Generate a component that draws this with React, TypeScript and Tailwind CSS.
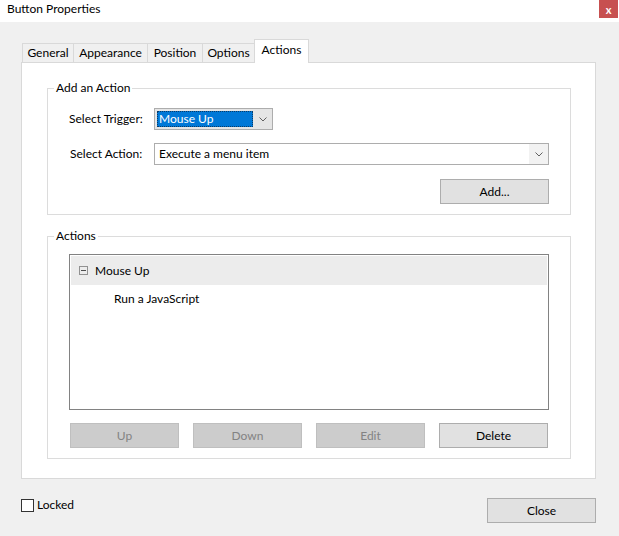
import { useState } from 'react';

const tabs = [
  { label: 'General', w: 'w-[52px]' },
  { label: 'Appearance', w: 'w-[75px]' },
  { label: 'Position', w: 'w-[56px]' },
  { label: 'Options', w: 'w-[53px]' },
];

function Chevron() {
  return (
    <svg width="8" height="5" viewBox="0 0 8 5" className="text-[#606060]">
      <path d="M0.5 0.5 L4 4 L7.5 0.5" fill="none" stroke="currentColor" strokeWidth="1" />
    </svg>
  );
}

function WinButton({ label, disabled, className = '' }: { label: string; disabled?: boolean; className?: string }) {
  return (
    <button
      className={
        'w-[109px] h-[25px] border text-[12px] ' +
        (disabled ? 'bg-[#cccccc] border-[#bfbfbf] text-[#838383]' : 'bg-[#e1e1e1] border-[#adadad] text-black') +
        ' ' +
        className
      }
    >
      {label}
    </button>
  );
}

export default function App() {
  const [locked, setLocked] = useState(false);

  return (
    <div className="w-[619px] h-[536px] bg-[#f0f0f0] flex flex-col font-['Segoe_UI','Lato',sans-serif] text-[12px] text-black leading-[16px] overflow-hidden">
      {/* title bar */}
      <div className="h-[22px] bg-white flex justify-between items-start">
        <span className="pl-[7px] pt-px">Button Properties</span>
        <div className="w-[19px] h-[18px] mr-[1px] bg-[#c75050] text-white text-[11px] font-bold flex items-center justify-center leading-none">x</div>
      </div>

      {/* tabs */}
      <div className="flex items-end pl-[22px] mt-[17px] h-[23px]">
        {tabs.map((t) => (
          <div key={t.label} className={`${t.w} h-[19px] border border-[#d9d9d9] border-b-0 -ml-px first:ml-0 bg-[#f0f0f0] flex items-center justify-center`}>
            {t.label}
          </div>
        ))}
        <div className="w-[55px] h-[24px] border border-[#d9d9d9] border-b-0 -ml-px bg-white relative z-10 -mb-px flex items-start justify-center pt-[2px]">
          Actions
        </div>
      </div>

      {/* panel */}
      <div className="ml-[21px] w-[575px] h-[417px] border border-[#d9d9d9] bg-white pt-[17px] pl-[25px]">
        <fieldset className="w-[524px] border border-[#dcdcdc] pb-[10px]">
          <legend className="ml-[6px] px-[2px] leading-[16px]">Add an Action</legend>
          <div className="pt-[12px] pl-[21px] pr-[21px]">
            <div className="flex items-center h-[22px]">
              <span className="w-[85px]">Select Trigger:</span>
              <div className="w-[119px] h-[22px] border border-[#adadad] bg-[#e5e5e5] flex items-center pl-[2px]">
                <div className="w-[96px] h-[16px] bg-[#0078d7] text-white outline outline-1 outline-dotted outline-[#0b3b66] -outline-offset-1 pl-[2px] leading-[16px]">
                  Mouse Up
                </div>
                <div className="flex-1 flex justify-center">
                  <Chevron />
                </div>
              </div>
            </div>
            <div className="flex items-center h-[22px] mt-[13px]">
              <span className="w-[85px] pl-px">Select Action:</span>
              <div className="w-[395px] h-[22px] border border-[#adadad] bg-white flex items-center">
                <span className="flex-1 pl-[4px]">Execute a menu item</span>
                <div className="w-[19px] h-full bg-[#f2f2f2] flex items-center justify-center">
                  <Chevron />
                </div>
              </div>
            </div>
            <div className="flex justify-end mt-[14px]">
              <WinButton label="Add..." className="h-[24px]" />
            </div>
          </div>
        </fieldset>

        <fieldset className="w-[524px] border border-[#dcdcdc] mt-[13px] pb-[10px]">
          <legend className="ml-[6px] px-[2px] leading-[16px]">Actions</legend>
          <div className="pt-[10px] pl-[21px]">
            <div className="w-[480px] h-[156px] border border-[#828282] bg-white p-px">
              <div className="h-[29px] bg-[#ececec] flex items-center pl-[8px]">
                <span className="w-[9px] h-[9px] border border-[#919191] flex items-center justify-center mr-[7px]">
                  <span className="w-[5px] h-px bg-[#4d4d4d]" />
                </span>
                Mouse Up
              </div>
              <div className="pl-[43px] pt-[6px]">Run a JavaScript</div>
            </div>
            <div className="flex gap-[14px] mt-[13px] ml-px">
              <WinButton label="Up" disabled />
              <WinButton label="Down" disabled />
              <WinButton label="Edit" disabled />
              <WinButton label="Delete" />
            </div>
          </div>
        </fieldset>
      </div>

      {/* footer */}
      <div className="flex items-start justify-between mt-[19px] pl-[21px] pr-[23px]">
        <label className="flex items-center gap-[3px] cursor-default mt-[-1px]">
          <button
            onClick={() => setLocked(!locked)}
            className="w-[13px] h-[13px] border border-[#333333] bg-white flex items-center justify-center text-[10px] leading-none"
          >
            {locked ? '✓' : ''}
          </button>
          Locked
        </label>
        <WinButton label="Close" />
      </div>
    </div>
  );
}
